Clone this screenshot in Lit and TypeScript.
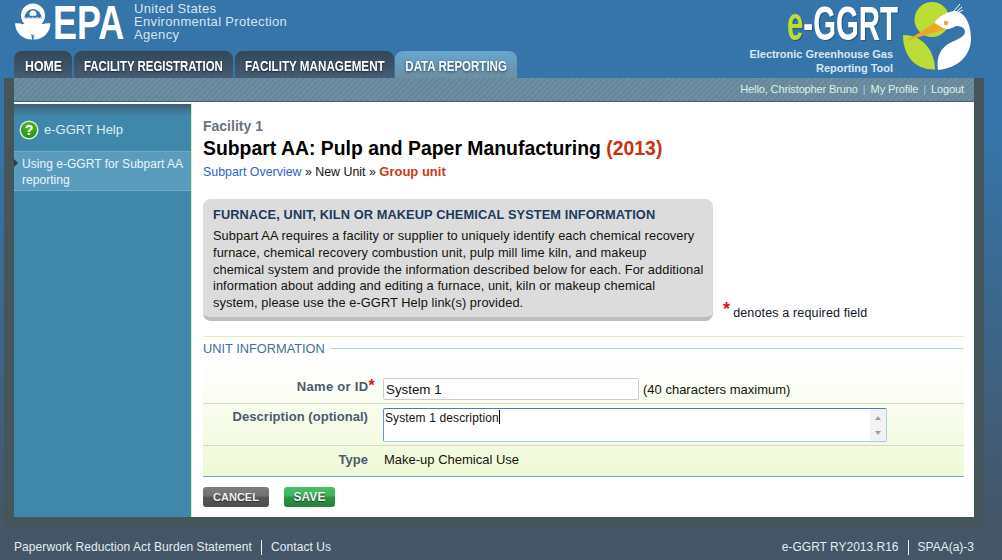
import { LitElement, html, css } from "lit";
import { customElement } from "lit/decorators.js";

@customElement("app-root")
export class AppRoot extends LitElement {
  static styles = css`
    :host { display: block; width: 1002px; height: 560px; overflow: hidden; position: relative;
      font-family: "Liberation Sans", Arial, sans-serif; font-size: 12px; color: #111;
      background: linear-gradient(180deg, #3575aa 0, #3575aa 130px, #445668 520px, #445567 560px); }
    * { box-sizing: border-box; }
    .header { height: 78px; display: flex; justify-content: space-between; }
    .brand { display: flex; flex-direction: column; padding-left: 14px; }
    .epa { height: 51px; display: flex; align-items: flex-start; }
    .epa-mark { width: 36px; height: 37px; margin: 3px 0 0 1px; flex: none; }
    .epa-word { width: 83px; height: 44px; flex: none; }
    .epa-word text { font-family: "Liberation Sans", Arial, sans-serif; font-weight: 700; font-size: 48px; fill: #fff; }
    .agency { color: #d7e4ee; font-size: 13px; line-height: 13px; letter-spacing: .33px; padding-top: 2px; }
    .tabs { display: flex; gap: 2px; height: 27px; }
    .tab { height: 27px; border-radius: 8px 8px 0 0; color: #fff; font-weight: 700; font-size: 15px;
      display: flex; align-items: center; justify-content: center; padding-top: 1px;
      background: linear-gradient(180deg, #33465a, #465c72); text-shadow: 0 1px 2px #16242f; white-space: nowrap; }
    .tab span { display: inline-block; transform: scaleX(.76); }
    .tab.home { width: 58px; } .tab.home span { transform: scaleX(.82); }
    .tab.reg { width: 159px; } .tab.man { width: 159px; } .tab.man span { transform: scaleX(.777); }
    .tab.active { width: 122px; margin-left: -1px; background: linear-gradient(180deg, #66a6cf, #6c8fa2); color: #f4f8f8; text-shadow: 0 1px 3px #2b4453; }
    .tab.active span { transform: scaleX(.768); }
    .ggrt { display: flex; padding-right: 25px; }
    .ggrt-text { display: flex; flex-direction: column; align-items: flex-end; width: 200px; }
    .ggrt-word { width: 112px; height: 45px; flex: none; margin-right: -1px; filter: drop-shadow(1px 1px 0 #25577f); }
    .ggrt-word text { font-family: "Liberation Sans", Arial, sans-serif; font-weight: 700; font-size: 49px; fill: #fff; }
    .ggrt-word .lime { fill: #bcdc37; }
    .ggrt-sub { font-weight: 700; font-size: 11px; line-height: 14px; letter-spacing: -.03px; color: #dbe7ef; text-align: right; margin: 2px 5px 0 0; white-space: nowrap; }
    .heron { width: 74px; height: 74px; margin: 1px 0 0 5px; flex: none; }

    .shell { width: 980px; height: 449px; margin-left: 4px; padding: 0 10px 10px; background: #45555c; display: flex; flex-direction: column; }
    .band { height: 24px; flex: none; display: flex; justify-content: flex-end; align-items: center; gap: 4px; padding: 0 10px 2px 0;
      font-size: 11px; letter-spacing: -.12px; color: #d3ecdf; border-bottom: 1px solid #4c5f66;
      background: repeating-linear-gradient(135deg, #658799 0 2px, #6e8fa1 2px 4px); background-color: #6c8d9f; }
    .band a { color: #dff0ea; } .band i { font-style: normal; color: #9fcbe2; margin: 0 1px; }
    .body { flex: 1; display: flex; background: #fff; padding-top: 1px; min-height: 0; }
    .side { width: 177px; flex: none; background: linear-gradient(180deg, #3c5f73 0, #4088ab 12px, #4088ab 100%); margin-top: 1px; }
    .help { height: 47px; display: flex; align-items: center; padding: 4px 0 0 5px; gap: 5px; color: #dcedf4; font-size: 13px; }
    .help svg { width: 20px; height: 20px; flex: none; }
    .item { position: relative; height: 40px; padding: 4px 4px 0 8px; background: #5a9cbd; border-top: 1px solid #6daac6; border-bottom: 1px solid #72afcb;
      color: #eaf5f9; line-height: 16px; letter-spacing: .03px; }
    .item::before { content: ""; position: absolute; left: 0; top: 7px; border: 4px solid transparent; border-left-color: #2c3a42; border-right-width: 0; }
    .main { flex: 1; border-left: 1px solid #dcecad; padding: 15px 10px 0 11px; min-width: 0; }
    .fac { font-weight: 700; font-size: 14px; line-height: 17px; color: #6b7380; }
    .title { font-weight: 700; font-size: 19.4px; line-height: 26px; color: #000; }
    .title em { font-style: normal; color: #c8320e; }
    .crumbs { line-height: 16px; margin-top: 3px; color: #111; font-size: 12.4px; }
    .crumbs a { color: #2a66c4; } .crumbs b { color: #cc3a12; font-size: 13px; }
    .intro { display: flex; align-items: flex-end; margin-top: 19px; gap: 10px; }
    .box { width: 510px; height: 122px; flex: none; background: #dcdcdc; border-radius: 8px; border-bottom: 4px solid #bdbdbd; padding: 8px 10px 0; line-height: 16.8px; font-size: 12.8px; letter-spacing: .08px; color: #15130f; white-space: nowrap; }
    .box h2 { margin: 0 0 5px; font-size: 12.8px; line-height: 16px; font-weight: 700; color: #1d3a60; letter-spacing: .1px; }
    .req { display: flex; gap: 3px; align-items: flex-start; line-height: 14px; font-size: 12.5px; letter-spacing: .15px; padding-bottom: 1px; color: #101528; }
    .req b { color: #e0101c; font-weight: 700; font-size: 18px; line-height: 14px; margin-top: -4px; }
    .mark { color: #e0101c; font-weight: 700; font-size: 16px; line-height: 10px; }
    .rule { height: 1px; background: #e3f0b5; margin-top: 15px; }
    .legend { height: 22px; display: flex; align-items: center; gap: 5px; color: #3f7099; font-size: 12.8px; background: #fff; }
    .legend span { flex: none; } .legend::after { content: ""; flex: 1; height: 1px; background: #b6d8ec; }
    .form { background: linear-gradient(180deg, #fff, #eff9d6); border-bottom: 1px solid #6ba7cb; }
    .row { display: grid; grid-template-columns: 165px 1fr; column-gap: 15px; border-bottom: 1px solid #d5d8c2; }
    .row:last-child { border-bottom: 0; }
    .row.r1 { height: 45px; padding-top: 16px; }
    .row.r2 { height: 42px; padding-top: 1px; }
    .row.r3 { height: 30px; align-items: center; padding-bottom: 3px; }
    .lbl { text-align: right; font-weight: 700; font-size: 13px; color: #4b5a6e; letter-spacing: .05px; line-height: 16px; white-space: nowrap; }
    .r1 .lbl { margin-right: -7px; letter-spacing: .3px; padding-top: 4px; }
    .r2 .lbl { padding-top: 4px; }
    .val { display: flex; align-items: center; gap: 4px; font-size: 13px; color: #15130f; }
    .r3 .val { padding-left: 1px; }
    .input { width: 256px; height: 22px; border: 1px solid #c7cdd0; border-radius: 2px; background: #fff; padding: 3px 0 0 2px; line-height: 15px; font-size: 13.33px; }
    .textarea { width: 504px; height: 34px; border: 1px solid #a9cdea; border-top-color: #3f7fbd; border-left-color: #5f97c9; border-radius: 2px; background: #fff;
      display: flex; justify-content: space-between; padding: 1px 0 0 1px; line-height: 15px; font-size: 12px; letter-spacing: .12px; }
    .caret { display: inline-block; width: 1px; height: 14px; background: #000; vertical-align: -2px; }
    .sb { width: 16px; margin-top: -1px; background: #f1f2f2; display: flex; flex-direction: column; justify-content: space-between; align-items: center; padding: 7px 0 6px; }
    .sb i { width: 0; border: 3.5px solid transparent; border-top-width: 0; border-bottom: 4px solid #9aa0a3; }
    .sb i + i { border-bottom-width: 0; border-top: 4px solid #9aa0a3; border-bottom-color: transparent; }
    .actions { display: flex; gap: 15px; margin-top: 10px; }
    .btn { height: 20px; border-radius: 3px; color: #eef3ee; font-weight: 700; font-size: 12px; display: flex; align-items: center; justify-content: center; text-shadow: 0 1px 1px #333; }
    .cancel { width: 66px; font-size: 11px; background: linear-gradient(180deg, #7d7d7d 0, #737373 45%, #555 50%, #4e4e4e 100%); }
    .save { width: 51px; background: linear-gradient(180deg, #44c168 0, #3eb25d 45%, #2b9446 50%, #27803f 100%); }
    .footer { height: 33px; display: flex; justify-content: space-between; align-items: center; padding: 7px 28px 0 14px; color: #e3edf3; letter-spacing: .08px; }
    .group { display: flex; align-items: center; gap: 9px; }
    .group.tight { letter-spacing: 0; }
    .sep { width: 1px; height: 15px; background: #eef4f6; }
  `;

  render() {
    return html`
      <div class="header">
        <div class="brand">
          <div class="epa">
            <svg class="epa-mark" viewBox="15 3 36 37">
              <circle cx="33" cy="15.5" r="12" fill="#fff"/>
              <path d="M24.5 18a8.5 9 0 0 1 17 0c-1.5 1.2-3 1.2-4.2 0-1.4 1.2-3 1.2-4.3 0-1.4 1.2-2.9 1.2-4.3 0-1.4 1.2-2.8 1.2-4.2 0z" fill="#3575aa"/>
              <path d="M29.5 14a3.5 3.5 0 0 1 7 0c0 .8-.3 1.4-.6 1.8h-5.8c-.3-.4-.6-1-.6-1.8z" fill="#fff"/>
              <path d="M25 17.6c1.3 1 2.7 1 4 0 1.3 1 2.7 1 4 0 1.3 1 2.7 1 4 0 1.3 1 2.7 1 4 0" fill="none" stroke="#fff" stroke-width="1"/>
              <path d="M15 23.5c8-1.5 16 4 17.2 16C23 40 15.5 33 15 23.5z" fill="#fff"/>
              <path d="M50.5 23.5c-8-1.5-16 4-17.2 16 9.2.5 16.7-6.5 17.2-16z" fill="#fff"/>
              <path d="M21 25.5c4-3 8-3.5 12-3.5s8 .5 12 3.5l-12 10z" fill="#fff"/>
            </svg>
            <svg class="epa-word" viewBox="0 0 110.7 44" preserveAspectRatio="none"><text x="2.7" y="38.5">EPA</text></svg>
            <div class="agency">United States<br>Environmental Protection<br>Agency</div>
          </div>
          <div class="tabs">
            <div class="tab home"><span>HOME</span></div>
            <div class="tab reg"><span>FACILITY REGISTRATION</span></div>
            <div class="tab man"><span>FACILITY MANAGEMENT</span></div>
            <div class="tab active"><span>DATA REPORTING</span></div>
          </div>
        </div>
        <div class="ggrt">
          <div class="ggrt-text">
            <svg class="ggrt-word" viewBox="0 0 186.7 45" preserveAspectRatio="none"><text x="0" y="40"><tspan class="lime">e</tspan>-GGRT</text></svg>
            <div class="ggrt-sub">Electronic Greenhouse Gas<br>Reporting Tool</div>
          </div>
          <svg class="heron" viewBox="903 3 74 74">
            <circle cx="932" cy="21.5" r="17.5" fill="#bcdc37"/>
            <path d="M903 37C919 36 935 50 935 71.5 915 72 903 58 903 37z" fill="#bcdc37"/>
            <path d="M934 26C937 19 948 13 956 13 966 15 971 28 971 40 971 58 958 70 938 72 936 60 940 50 950 45 958 41 966 38 965 33 964 29 960 28 956 28 952 30 948 32 944 31 940 30 937 28 934 26z" fill="#fff"/>
            <path d="M906 43L935 25C938 27 942 30 946 31z" fill="#eda62a"/>
            <circle cx="946" cy="25" r="2.2" fill="#eda62a"/>
            <path d="M953 14L960 6M956 14L962 9M957 15L963 12" stroke="#fff" stroke-width="1" fill="none"/>
          </svg>
        </div>
      </div>
      <div class="shell">
        <div class="band"><a>Hello, Christopher Bruno</a><i>|</i><a>My Profile</a><i>|</i><a>Logout</a></div>
        <div class="body">
          <div class="side">
            <div class="help">
              <svg viewBox="0 0 20 20">
                <defs><radialGradient id="g" cx=".5" cy=".3" r=".75"><stop offset="0" stop-color="#5cc032"/><stop offset="1" stop-color="#1f8a10"/></radialGradient></defs>
                <circle cx="10" cy="10" r="9.5" fill="#dfe8e4"/>
                <circle cx="10" cy="10" r="8" fill="url(#g)"/>
                <text x="10" y="14.8" text-anchor="middle" font-family="Liberation Sans" font-weight="700" font-size="14" fill="#fff">?</text>
              </svg>
              <span>e-GGRT Help</span>
            </div>
            <div class="item">Using e-GGRT for Subpart AA reporting</div>
          </div>
          <div class="main">
            <div class="fac">Facility 1</div>
            <div class="title">Subpart AA: Pulp and Paper Manufacturing <em>(2013)</em></div>
            <div class="crumbs"><a>Subpart Overview</a> » New Unit » <b>Group unit</b></div>
            <div class="intro">
              <div class="box">
                <h2>FURNACE, UNIT, KILN OR MAKEUP CHEMICAL SYSTEM INFORMATION</h2>
                Subpart AA requires a facility or supplier to uniquely identify each chemical recovery<br>
                furnace, chemical recovery combustion unit, pulp mill lime kiln, and makeup<br>
                chemical system and provide the information described below for each. For additional<br>
                information about adding and editing a furnace, unit, kiln or makeup chemical<br>
                system, please use the e-GGRT Help link(s) provided.
              </div>
              <div class="req"><b>*</b><span>denotes a required field</span></div>
            </div>
            <div class="rule"></div>
            <div class="legend"><span>UNIT INFORMATION</span></div>
            <div class="form">
              <div class="row r1">
                <div class="lbl">Name or ID<span class="mark">*</span></div>
                <div class="val"><div class="input">System 1</div>(40 characters maximum)</div>
              </div>
              <div class="row r2">
                <div class="lbl">Description (optional)</div>
                <div class="val"><div class="textarea"><span>System 1 description<span class="caret"></span></span><div class="sb"><i></i><i></i></div></div></div>
              </div>
              <div class="row r3">
                <div class="lbl">Type</div>
                <div class="val">Make-up Chemical Use</div>
              </div>
            </div>
            <div class="actions"><div class="btn cancel">CANCEL</div><div class="btn save">SAVE</div></div>
          </div>
        </div>
      </div>
      <div class="footer">
        <div class="group"><span>Paperwork Reduction Act Burden Statement</span><span class="sep"></span><span>Contact Us</span></div>
        <div class="group tight"><span>e-GGRT RY2013.R16</span><span class="sep"></span><span>SPAA(a)-3</span></div>
      </div>
    `;
  }
}
